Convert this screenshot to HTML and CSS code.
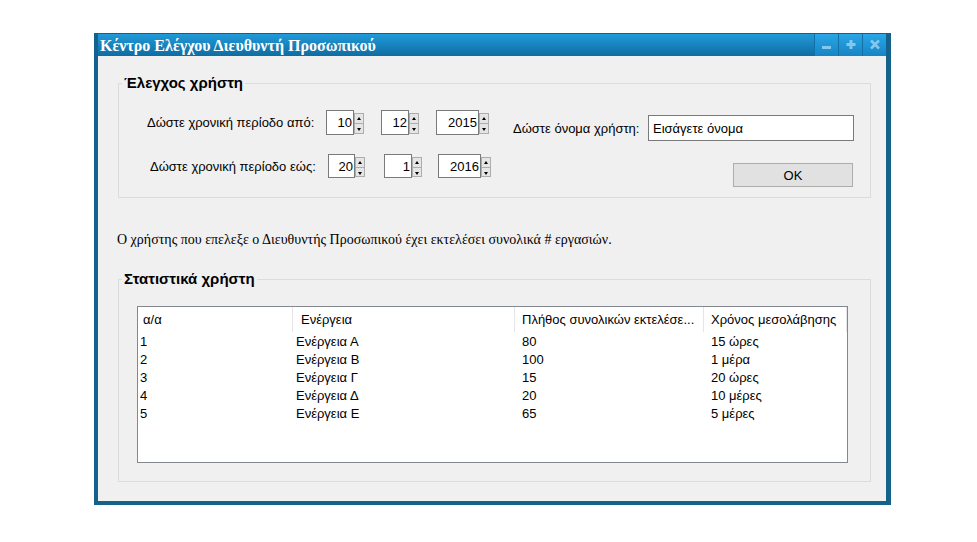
FILE: index.html
```html
<!DOCTYPE html>
<html lang="el">
<head>
<meta charset="utf-8">
<title>Κέντρο Ελέγχου Διευθυντή Προσωπικού</title>
<link rel="stylesheet" href="styles.css">
</head>
<body>
<div class="window">
  <div class="titlebar">
    <span class="title">Κέντρο Ελέγχου Διευθυντή Προσωπικού</span>
    <div class="ctrls">
      <span class="cbtn"><svg width="23" height="22" viewBox="0 0 23 22"><rect x="7" y="12" width="9" height="3" fill="#86c8ec"/></svg></span>
      <span class="cbtn"><svg width="23" height="22" viewBox="0 0 23 22"><rect x="7.5" y="9" width="9" height="3" fill="#86c8ec"/><rect x="10.5" y="6" width="3" height="9" fill="#86c8ec"/></svg></span>
      <span class="cbtn"><svg width="23" height="22" viewBox="0 0 23 22"><path d="M8 6.5 L16 14.5 M16 6.5 L8 14.5" stroke="#86c8ec" stroke-width="2.6"/></svg></span>
    </div>
  </div>
  <div class="content">
    <fieldset class="group g1">
      <legend>Έλεγχος χρήστη</legend>
      <div class="g1-body">
        <div class="dates">
          <div class="drow r1">
            <span class="lbl">Δώστε χρονική περίοδο από:</span>
            <div class="spin"><span class="num d">10</span><span class="arrows"><span class="up"></span><span class="down"></span></span></div>
            <div class="spin"><span class="num d">12</span><span class="arrows"><span class="up"></span><span class="down"></span></span></div>
            <div class="spin"><span class="num y">2015</span><span class="arrows"><span class="up"></span><span class="down"></span></span></div>
          </div>
          <div class="drow r2">
            <span class="lbl">Δώστε χρονική περίοδο εώς:</span>
            <div class="spin"><span class="num d">20</span><span class="arrows"><span class="up"></span><span class="down"></span></span></div>
            <div class="spin"><span class="num d">1</span><span class="arrows"><span class="up"></span><span class="down"></span></span></div>
            <div class="spin"><span class="num y">2016</span><span class="arrows"><span class="up"></span><span class="down"></span></span></div>
          </div>
        </div>
        <div class="user">
          <div class="urow">
            <span class="lbl">Δώστε όνομα χρήστη:</span>
            <span class="input">Εισάγετε όνομα</span>
          </div>
          <button class="ok" type="button">OK</button>
        </div>
      </div>
    </fieldset>
    <p class="summary">Ο χρήστης που επελεξε ο Διευθυντής Προσωπικού έχει εκτελέσει συνολικά # εργασιών.</p>
    <fieldset class="group g2">
      <legend>Στατιστικά χρήστη</legend>
      <div class="list">
        <div class="lhead">
          <span>α/α</span><span>Ενέργεια</span><span>Πλήθος συνολικών εκτελέσε...</span><span>Χρόνος μεσολάβησης</span><span class="fill"></span>
        </div>
        <div class="lrow"><span>1</span><span>Ενέργεια Α</span><span>80</span><span>15 ώρες</span></div>
        <div class="lrow"><span>2</span><span>Ενέργεια Β</span><span>100</span><span>1 μέρα</span></div>
        <div class="lrow"><span>3</span><span>Ενέργεια Γ</span><span>15</span><span>20 ώρες</span></div>
        <div class="lrow"><span>4</span><span>Ενέργεια Δ</span><span>20</span><span>10 μέρες</span></div>
        <div class="lrow"><span>5</span><span>Ενέργεια Ε</span><span>65</span><span>5 μέρες</span></div>
      </div>
    </fieldset>
  </div>
</div>
</body>
</html>
```
FILE: styles.css
```css
* { box-sizing: border-box; }
html, body { margin: 0; background: #ffffff; }
body {
  padding: 33px 0 0 94px;
  font-family: "Liberation Sans", Arial, sans-serif;
  font-size: 13px;
  color: #000;
}
.window {
  width: 797px;
  height: 472px;
  border-style: solid;
  border-color: #14618b;
  border-width: 1px 5px 4px 4px;
  background: #f0f0f0;
  display: flex;
  flex-direction: column;
}
.titlebar {
  height: 22px;
  flex: 0 0 22px;
  background: linear-gradient(#219ad9, #0f6ca2);
  display: flex;
  align-items: center;
  justify-content: space-between;
}
.title {
  font-family: "Liberation Serif", "Times New Roman", serif;
  font-weight: bold;
  font-size: 16px;
  color: #fff;
  padding-left: 2px;
  padding-top: 1px;
}
.ctrls { display: flex; height: 22px; }
.cbtn {
  width: 24px;
  height: 22px;
  background: linear-gradient(#2aa6e6, #1684c4);
  border-left: 1px solid #1270a6;
  display: block;
}
.cbtn svg { display: block; }
.content { flex: 1; padding: 18px 15px 0 20px; }

.group {
  margin: 0;
  padding: 0;
  border: 1px solid #dcdcdc;
  width: 753px;
}
.group legend {
  font-weight: bold;
  font-size: 15px;
  line-height: 18px;
  padding: 0 2px;
  margin-left: 3px;
}
.g1 { height: 124px; }
.g1-body { display: flex; }
.dates { flex: 0 0 394px; padding-top: 18px; }
.drow { display: flex; align-items: center; height: 25px; }
.drow + .drow { margin-top: 19px; height: 24px; }
.r1 { padding-left: 28px; }
.r2 { padding-left: 31px; }
.lbl { white-space: nowrap; }
.r1 .lbl { width: 166px; margin-right: 13px; }
.r2 .lbl { width: 167px; margin-right: 11px; }
.r1 .spin + .spin { margin-left: 17px; }
.r2 .spin:nth-child(3) { margin-left: 19px; }
.r2 .spin:nth-child(4) { margin-left: 16px; }
.r2 .spin:nth-child(2) .num { width: 27px; }

.spin { display: flex; height: 100%; }
.num {
  display: flex;
  align-items: center;
  justify-content: flex-end;
  height: 100%;
  border: 1px solid #7a7a7a;
  background: #fff;
  padding-right: 1px;
}
.num.d { width: 28px; }
.num.y { width: 43px; }
.arrows {
  display: flex;
  flex-direction: column;
  width: 10px;
  margin-top: 3px;
  margin-bottom: 1px;
}
.arrows span {
  flex: 1;
  border: 1px solid #adadad;
  background: #e5e5e5;
  position: relative;
}
.arrows .down { border-top: 0; }
.arrows span::after {
  content: "";
  position: absolute;
  left: 2px;
  top: 3px;
  border-left: 2.5px solid transparent;
  border-right: 2.5px solid transparent;
}
.arrows .up::after { border-bottom: 3px solid #000; }
.arrows .down::after { border-top: 3px solid #000; top: 4px; }

.user { padding-top: 23px; display: flex; flex-direction: column; }
.urow { display: flex; align-items: center; height: 26px; }
.urow .lbl { width: 124px; margin-right: 11px; }
.input {
  width: 206px;
  height: 26px;
  border: 1px solid #7a7a7a;
  background: #fff;
  display: flex;
  align-items: center;
  padding-left: 4px;
}
.ok {
  margin: 22px 0 0 220px;
  width: 120px;
  height: 24px;
  border: 1px solid #adadad;
  background: #e1e1e1;
  font-family: "Liberation Sans", Arial, sans-serif;
  font-size: 13px;
  color: #000;
  padding: 0;
}

.summary {
  margin: 0;
  padding: 34px 0 0 0;
  height: 72px;
  font-family: "Liberation Serif", "Times New Roman", serif;
  font-size: 14px;
  line-height: 16px;
  margin-left: -1px;
}
.g2 { height: 212px; }
.list {
  margin: 18px 0 0 18px;
  width: 711px;
  height: 157px;
  border: 1px solid #828790;
  background: #fff;
}
.lhead, .lrow {
  display: grid;
  grid-template-columns: 155px 222px 189px 143px 1fr;
}
.lhead { height: 25px; }
.lhead span {
  border-right: 1px solid #e5e5e5;
  display: flex;
  align-items: center;
  white-space: nowrap;
  overflow: hidden;
}
.lhead .fill { border-right: 0; }
.lhead span:nth-child(1) { padding-left: 5px; }
.lhead span:nth-child(2) { padding-left: 8px; }
.lhead span:nth-child(3) { padding-left: 7px; }
.lhead span:nth-child(4) { padding-left: 7px; }
.lrow { height: 18px; align-items: center; }
.lrow span:nth-child(1) { padding-left: 2px; }
.lrow span:nth-child(2) { padding-left: 3px; }
.lrow span:nth-child(3) { padding-left: 7px; }
.lrow span:nth-child(4) { padding-left: 7px; }
```
